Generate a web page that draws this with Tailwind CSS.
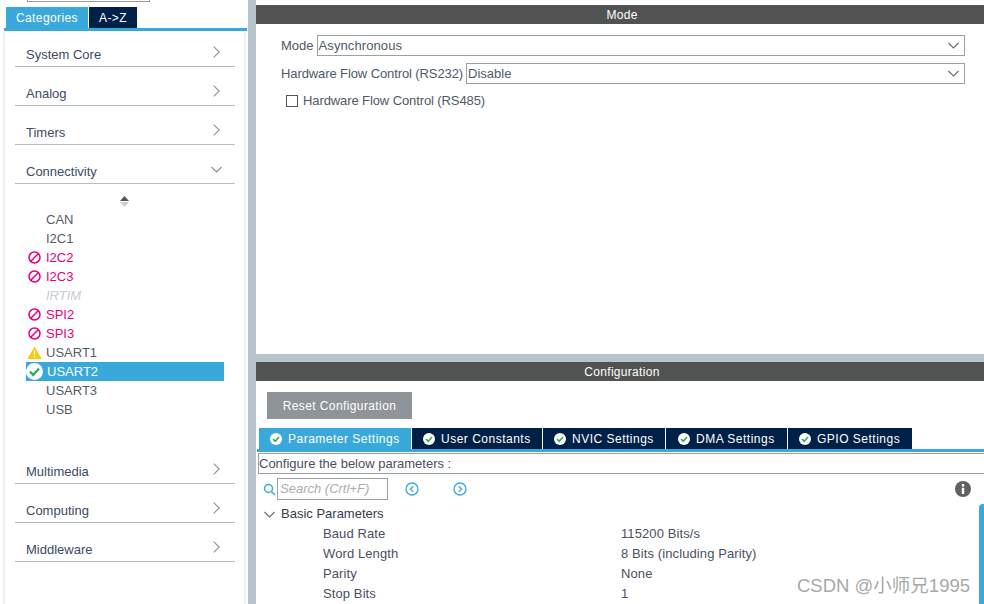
<!DOCTYPE html>
<html lang="en">
<head>
<meta charset="UTF-8">
<title>Pinout &amp; Configuration</title>
<script src="https://cdn.jsdelivr.net/npm/@tailwindcss/browser@4"></script>
</head>
<body class="bg-white">
<div class="relative flex w-[984px] h-[604px] overflow-hidden bg-white font-['Liberation_Sans',sans-serif] text-[13px] text-[#4c5a6b]">

  <!-- left: categories -->
  <aside class="w-[248px] h-full shrink-0 flex flex-col">
    <div class="ml-[27px] w-[123px] h-[2px] border-b border-x border-[#9a9a9a]"></div>
    <div class="flex ml-[6px] mt-[5px] h-[21px] gap-[1px] text-[12px] tracking-[0.4px] text-white">
      <div class="w-[82px] bg-[#39a9dc] flex items-center justify-center">Categories</div>
      <div class="w-[48px] bg-[#002147] flex items-center justify-center">A-&gt;Z</div>
    </div>
    <div class="ml-[4px] w-[243px] h-[3px] bg-[#39a9dc]"></div>
    <div class="ml-[3px] w-[243px] flex-1 border-x-2 border-[#eef0f1] pl-[10px] pr-[9px]">

      <div class="w-[220px] h-[36px] mb-[3px] border-b border-[#b4bfc6] flex items-end justify-between pl-[11px] pr-[15px] pb-[2px]">
        <span class="text-[#3c4a66]">System Core</span>
        <svg class="w-[7px] h-[12px] mb-[6px]" viewBox="0 0 7 12" fill="none" stroke="#8a8f94" stroke-width="1.1"><path d="M.7 .7L6.200 6 .7 11.300"/></svg>
      </div>
      <div class="w-[220px] h-[36px] mb-[3px] border-b border-[#b4bfc6] flex items-end justify-between pl-[11px] pr-[15px] pb-[2px]">
        <span class="text-[#3c4a66]">Analog</span>
        <svg class="w-[7px] h-[12px] mb-[6px]" viewBox="0 0 7 12" fill="none" stroke="#8a8f94" stroke-width="1.1"><path d="M.7 .7L6.200 6 .7 11.300"/></svg>
      </div>
      <div class="w-[220px] h-[36px] mb-[3px] border-b border-[#b4bfc6] flex items-end justify-between pl-[11px] pr-[15px] pb-[2px]">
        <span class="text-[#3c4a66]">Timers</span>
        <svg class="w-[7px] h-[12px] mb-[6px]" viewBox="0 0 7 12" fill="none" stroke="#8a8f94" stroke-width="1.1"><path d="M.7 .7L6.200 6 .7 11.300"/></svg>
      </div>
      <div class="w-[220px] h-[36px] border-b border-[#b4bfc6] flex items-end justify-between pl-[11px] pr-[13px] pb-[2px]">
        <span class="text-[#3c4a66]">Connectivity</span>
        <svg class="w-[11px] h-[7px] mb-[8px]" viewBox="0 0 11 7" fill="none" stroke="#8a8f94" stroke-width="1.1"><path d="M.5 1l5 5 5-5"/></svg>
      </div>

      <!-- peripheral list -->
      <div class="h-[26px] flex items-start justify-center pt-[12px] pr-[1px]">
        <svg class="w-[9px] h-[11px]" viewBox="0 0 9 11"><path d="M4.500 0L9 5H0z" fill="#555"/><path d="M0 6h9L4.500 11z" fill="#c9cdd0"/></svg>
      </div>
      <ul class="leading-[19px] w-[209px]">
        <li class="h-[19px] pl-[31px] text-[#555c66]">CAN</li>
        <li class="h-[19px] pl-[31px] text-[#555c66]">I2C1</li>
        <li class="relative h-[19px] pl-[31px] text-[#e6007e]">
          <svg class="absolute left-[13px] top-[3px] w-[13px] h-[13px]" viewBox="0 0 13 13" fill="none" stroke="#e6007e" stroke-width="1.500"><circle cx="6.500" cy="6.500" r="5.500"/><path d="M2.800 10.200l7.400-7.400"/></svg>I2C2</li>
        <li class="relative h-[19px] pl-[31px] text-[#e6007e]">
          <svg class="absolute left-[13px] top-[3px] w-[13px] h-[13px]" viewBox="0 0 13 13" fill="none" stroke="#e6007e" stroke-width="1.500"><circle cx="6.500" cy="6.500" r="5.500"/><path d="M2.800 10.200l7.400-7.400"/></svg>I2C3</li>
        <li class="h-[19px] pl-[31px] text-[#c5ccd4] italic">IRTIM</li>
        <li class="relative h-[19px] pl-[31px] text-[#e6007e]">
          <svg class="absolute left-[13px] top-[3px] w-[13px] h-[13px]" viewBox="0 0 13 13" fill="none" stroke="#e6007e" stroke-width="1.500"><circle cx="6.500" cy="6.500" r="5.500"/><path d="M2.800 10.200l7.400-7.400"/></svg>SPI2</li>
        <li class="relative h-[19px] pl-[31px] text-[#e6007e]">
          <svg class="absolute left-[13px] top-[3px] w-[13px] h-[13px]" viewBox="0 0 13 13" fill="none" stroke="#e6007e" stroke-width="1.500"><circle cx="6.500" cy="6.500" r="5.500"/><path d="M2.800 10.200l7.400-7.400"/></svg>SPI3</li>
        <li class="relative h-[19px] pl-[31px] text-[#555c66]">
          <svg class="absolute left-[12px] top-[3px] w-[15px] h-[13px]" viewBox="0 0 15 13"><path d="M7.500.5L14.700 13H.3z" fill="#fbc80f"/><path d="M6.800 4.500h1.400v4.500H6.800zM6.800 10h1.400v1.500H6.800z" fill="#fff"/></svg>USART1</li>
        <li class="relative h-[19px] ml-[11px] pl-[21px] bg-[#39a9dc] text-white">
          <svg class="absolute left-[0px] top-[1px] w-[17px] h-[17px]" viewBox="0 0 17 17"><circle cx="8.500" cy="8.500" r="8.500" fill="#fff"/><path d="M4 8.500l3.200 3.500L13 5.500" fill="none" stroke="#3ba56c" stroke-width="2.400"/></svg>USART2</li>
        <li class="h-[19px] pl-[31px] text-[#555c66]">USART3</li>
        <li class="h-[19px] pl-[31px] text-[#555c66]">USB</li>
      </ul>

      <div class="w-[220px] h-[36px] mt-[29px] mb-[3px] border-b border-[#b4bfc6] flex items-end justify-between pl-[11px] pr-[15px] pb-[2px]">
        <span class="text-[#3c4a66]">Multimedia</span>
        <svg class="w-[7px] h-[12px] mb-[6px]" viewBox="0 0 7 12" fill="none" stroke="#8a8f94" stroke-width="1.1"><path d="M.7 .7L6.200 6 .7 11.300"/></svg>
      </div>
      <div class="w-[220px] h-[36px] mb-[3px] border-b border-[#b4bfc6] flex items-end justify-between pl-[11px] pr-[15px] pb-[2px]">
        <span class="text-[#3c4a66]">Computing</span>
        <svg class="w-[7px] h-[12px] mb-[6px]" viewBox="0 0 7 12" fill="none" stroke="#8a8f94" stroke-width="1.1"><path d="M.7 .7L6.200 6 .7 11.300"/></svg>
      </div>
      <div class="w-[220px] h-[36px] border-b border-[#b4bfc6] flex items-end justify-between pl-[11px] pr-[15px] pb-[2px]">
        <span class="text-[#3c4a66]">Middleware</span>
        <svg class="w-[7px] h-[12px] mb-[6px]" viewBox="0 0 7 12" fill="none" stroke="#8a8f94" stroke-width="1.1"><path d="M.7 .7L6.200 6 .7 11.300"/></svg>
      </div>
    </div>
  </aside>

  <div class="w-[8px] shrink-0 bg-[#b8c4cc]"></div>

  <main class="flex-1 flex flex-col min-w-0">
    <!-- mode -->
    <section class="h-[354px] pt-[5px]">
      <div class="h-[19px] pl-[4px] bg-[#505352] text-white text-center text-[12px] tracking-[0.3px] leading-[20px]">Mode</div>
      <div class="mt-[11px] ml-[25px] w-[684px] flex items-center h-[21px]">
        <span class="mr-[3px]">Mode</span>
        <div class="flex-1 h-[21px] border border-[#9aa0a4] pl-[1px] pr-[5px] flex items-center justify-between">
          <span class="tracking-[0.1px]">Asynchronous</span>
          <svg class="w-[11px] h-[7px]" viewBox="0 0 11 7" fill="none" stroke="#6c7177" stroke-width="1.2"><path d="M.5 1l5 5 5-5"/></svg>
        </div>
      </div>
      <div class="mt-[7px] ml-[25px] w-[684px] flex items-center h-[21px]">
        <span class="mr-[3px] tracking-[-0.1px]">Hardware Flow Control (RS232)</span>
        <div class="flex-1 h-[21px] border border-[#9aa0a4] pl-[1px] pr-[5px] flex items-center justify-between">
          <span>Disable</span>
          <svg class="w-[11px] h-[7px]" viewBox="0 0 11 7" fill="none" stroke="#6c7177" stroke-width="1.2"><path d="M.5 1l5 5 5-5"/></svg>
        </div>
      </div>
      <div class="mt-[7px] ml-[30px] flex items-center h-[20px]">
        <div class="w-[12px] h-[12px] border border-[#555] mr-[5px]"></div>
        <span class="tracking-[-0.1px]">Hardware Flow Control (RS485)</span>
      </div>
    </section>

    <div class="h-[8px] shrink-0 bg-[#b8c4cc]"></div>

    <!-- configuration -->
    <section class="flex-1 min-h-0 relative">
      <div class="h-[19px] pl-[4px] bg-[#505352] text-white text-center text-[12px] tracking-[0.3px] leading-[20px]">Configuration</div>
      <div class="mt-[11px] ml-[11px] w-[145px] h-[27px] bg-[#8f9499] text-white text-[12px] tracking-[0.4px] flex items-center justify-center">Reset Configuration</div>

      <div class="mt-[9px] ml-[3px] flex h-[21px] gap-[1px] text-white text-[12px] tracking-[0.5px]">
        <div class="w-[152px] bg-[#39a9dc] flex items-center pl-[11px] gap-[6px]">
          <svg class="w-[12px] h-[12px]" viewBox="0 0 12 12"><circle cx="6" cy="6" r="6" fill="#fff"/><path d="M3 6l2.200 2.300L9 4" fill="none" stroke="#3ba56c" stroke-width="1.600"/></svg>Parameter Settings</div>
        <div class="w-[130px] bg-[#002147] flex items-center pl-[11px] gap-[6px]">
          <svg class="w-[12px] h-[12px]" viewBox="0 0 12 12"><circle cx="6" cy="6" r="6" fill="#fff"/><path d="M3 6l2.200 2.300L9 4" fill="none" stroke="#3ba56c" stroke-width="1.600"/></svg>User Constants</div>
        <div class="w-[122px] bg-[#002147] flex items-center pl-[11px] gap-[6px]">
          <svg class="w-[12px] h-[12px]" viewBox="0 0 12 12"><circle cx="6" cy="6" r="6" fill="#fff"/><path d="M3 6l2.200 2.300L9 4" fill="none" stroke="#3ba56c" stroke-width="1.600"/></svg>NVIC Settings</div>
        <div class="w-[121px] bg-[#002147] flex items-center pl-[12px] gap-[6px]">
          <svg class="w-[12px] h-[12px]" viewBox="0 0 12 12"><circle cx="6" cy="6" r="6" fill="#fff"/><path d="M3 6l2.200 2.300L9 4" fill="none" stroke="#3ba56c" stroke-width="1.600"/></svg>DMA Settings</div>
        <div class="w-[124px] bg-[#002147] flex items-center pl-[11px] gap-[6px]">
          <svg class="w-[12px] h-[12px]" viewBox="0 0 12 12"><circle cx="6" cy="6" r="6" fill="#fff"/><path d="M3 6l2.200 2.300L9 4" fill="none" stroke="#3ba56c" stroke-width="1.600"/></svg>GPIO Settings</div>
      </div>
      <div class="ml-[1px] h-[3px] bg-[#39a9dc]"></div>
      <div class="ml-[2px] mt-[1px] h-[21px] border-y border-l border-[#9a9fa3] flex items-center text-[#4a4f63]">Configure the below parameters :</div>

      <div class="h-[30px] flex items-center ml-[7px] pr-[13px]">
        <svg class="w-[13px] h-[13px] mr-[1px]" viewBox="0 0 13 13" fill="none" stroke="#39a9dc" stroke-width="1.500"><circle cx="5.500" cy="5.500" r="4"/><path d="M8.500 8.500l3.500 3.500"/></svg>
        <div class="w-[111px] h-[22px] border border-[#9a9fa3] pl-[2px] flex items-center italic text-[#a9aeb3]">Search (Crtl+F)</div>
        <svg class="w-[14px] h-[14px] ml-[17px]" viewBox="0 0 14 14" fill="none" stroke="#39a9dc" stroke-width="1.300"><circle cx="7" cy="7" r="6"/><path d="M8.200 4.200L5.400 7l2.800 2.800"/></svg>
        <svg class="w-[14px] h-[14px] ml-[34px]" viewBox="0 0 14 14" fill="none" stroke="#39a9dc" stroke-width="1.300"><circle cx="7" cy="7" r="6"/><path d="M5.800 4.200L8.600 7l-2.800 2.800"/></svg>
        <svg class="w-[16px] h-[16px] ml-auto" viewBox="0 0 16 16"><circle cx="8" cy="8" r="8" fill="#616161"/><path d="M6.800 6.800h2.400V13H6.800zM6.800 3h2.400v2.400H6.800z" fill="#fff"/></svg>
      </div>

      <div class="flex items-center h-[20px] ml-[8px] text-[#333c4a]">
        <svg class="w-[11px] h-[7px] mr-[6px]" viewBox="0 0 11 7" fill="none" stroke="#6c7177" stroke-width="1.2"><path d="M.5 1l5 5 5-5"/></svg>
        Basic Parameters
      </div>
      <div class="grid grid-cols-[298px_1fr] pl-[67px] auto-rows-[20px] leading-[20px] text-[#4a4f63] tracking-[0.1px]">
        <span>Baud Rate</span><span>115200 Bits/s</span>
        <span>Word Length</span><span>8 Bits (including Parity)</span>
        <span>Parity</span><span>None</span>
        <span>Stop Bits</span><span>1</span>
      </div>
      <div class="absolute right-0 top-[142px] w-[5px] h-[110px] bg-[#39a9dc] rounded-tl-[4px]"></div>
    </section>
  </main>

  <div class="absolute left-[797px] top-[574px] text-[18.5px] leading-[24px] text-[#a8a8a8] font-['Liberation_Sans','Noto_Sans_CJK_SC',sans-serif]">CSDN @小师兄1995</div>
</div>
</body>
</html>
